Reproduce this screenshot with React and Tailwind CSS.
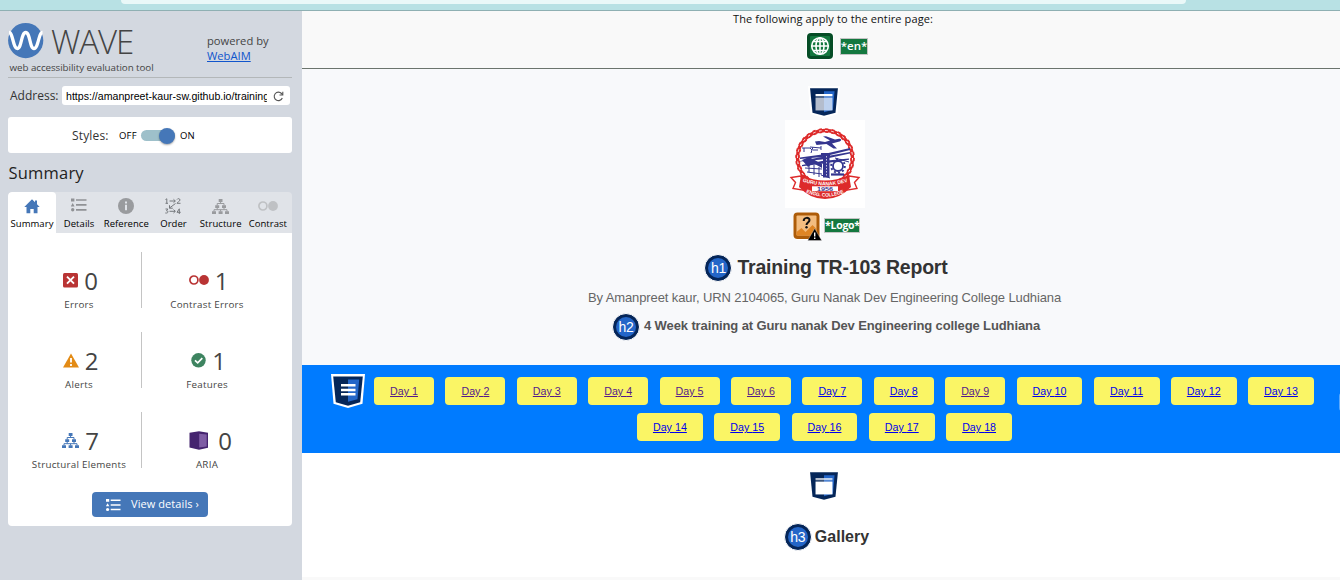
import React from 'react';

const sans = "font-['Open_Sans',sans-serif]";
const arial = "font-['Liberation_Sans',Arial,sans-serif]";

function WaveLogo() {
  return (
    <svg className="block h-[36px] w-[36px] shrink-0" viewBox="0 0 36 36">
      <circle cx="17.7" cy="17.6" r="17.6" fill="#4577b8" />
      <path d="M1 9.500C5 9.500 5 25.500 9.300 25.500C13.800 25.500 13 9.500 17.700 9.500C22.400 9.500 21.500 25.500 26 25.500C30.500 25.500 30.500 9.500 34.500 9.500" fill="none" stroke="#fff" strokeWidth="3.300" />
    </svg>
  );
}

function ListIcon({ className }) {
  return (
    <svg className={className} viewBox="0 0 16 14" fill="currentColor">
      <path d="M0 .5h3.400v3H0zM5 1.200h10.500v1.600H5zM5 6.100h10.500v1.600H5zM5 11.100h10.500v1.600H5zM1.700 5l1.900 3.400H-.2z" />
      <circle cx="1.700" cy="11.800" r="1.700" />
    </svg>
  );
}

function TreeIcon({ className }) {
  return (
    <svg className={className} viewBox="0 0 17 15" fill="currentColor">
      <path d="M6.700 0h3.800v3H6.700zM3.200 6.200h4v2.700h-4zM10 6.200h4v2.700h-4zM0 12.200h4V15H0zM6.600 12.200h4V15h-4zM13 12.200h4V15h-4z" />
      <path d="M8.600 3v1.500M5.200 6.500v-2h6.800v2M5.200 9v1.700M12 9v1.700M2 12.500v-1.800h13v1.800M8.600 12.500v-1.800" fill="none" stroke="currentColor" strokeWidth="1" />
    </svg>
  );
}

function HomeIcon() {
  return (
    <svg className="h-[15px] w-[16px]" viewBox="0 0 16 15" fill="#4577b8">
      <path d="M8 .3L.3 8H2.500V14.300H6.300V10H9.700V14.300H13.500V8H15.700L13 5.300V1.500H11V3.300z" />
    </svg>
  );
}

function InfoIcon() {
  return (
    <svg className="h-[16px] w-[16px]" viewBox="0 0 16 16">
      <circle cx="8" cy="8" r="8" fill="#999b9e" />
      <path d="M7 3.500h2v2H7zM7 6.800h2v5.500H7z" fill="#e0e3e8" />
    </svg>
  );
}

function OrderIcon() {
  return (
    <svg className="h-[16px] w-[16px]" viewBox="0 0 16 16" fill="none" stroke="#75787c" strokeWidth="1">
      <path d="M.5 1.500L1.800.8V5.300M.5 5.300H3M4.500 3H10.200M8.500 1.300l1.800 1.700-1.800 1.700M12 1.500C12.500.3 15 .3 15 2 15 3.300 12 4.300 12 5.300H15.500M10.500 5.500L4.500 10M4.500 7.200V10.200H7.800M.5 11H2.800L1.500 12.800C3.800 12.800 3.500 15.500.3 15M4.500 13.300H10.200M8.500 11.600l1.800 1.700-1.800 1.700M14.300 16V10.800L12 14.300H15.700" />
    </svg>
  );
}

function ContrastIcon({ className }) {
  return (
    <svg className={className} viewBox="0 0 20 10">
      <circle cx="4.900" cy="5" r="4" fill="none" stroke="currentColor" strokeWidth="1.700" />
      <circle cx="15" cy="5" r="4.900" fill="currentColor" />
    </svg>
  );
}

function ErrorIcon() {
  return (
    <svg className="h-[15px] w-[15px]" viewBox="0 0 15 15">
      <rect width="15" height="14.500" rx="1.500" fill="#b93434" />
      <path d="M4 3.700l7 7M11 3.700l-7 7" stroke="#fff" strokeWidth="1.900" />
    </svg>
  );
}

function AlertIcon() {
  return (
    <svg className="h-[15px] w-[16px]" viewBox="0 0 16 15">
      <path d="M8 .5L16 14.500H0z" fill="#e38b16" />
      <path d="M7.100 5h1.800v4.500H7.100zM7.100 11h1.800v1.900H7.100z" fill="#fff" />
    </svg>
  );
}

function FeatureIcon() {
  return (
    <svg className="h-[15px] w-[15px]" viewBox="0 0 15 15">
      <circle cx="7.500" cy="7.300" r="7.200" fill="#3e8460" />
      <path d="M4 7.300l2.700 2.500 4.600-4.600" fill="none" stroke="#fff" strokeWidth="1.700" />
    </svg>
  );
}

function AriaIcon() {
  return (
    <svg className="h-[19px] w-[20px]" viewBox="0 0 20 19">
      <path d="M.5 1.800L10 .3l9 1.500v15L10 18.700.5 16.500z" fill="#45246f" />
      <path d="M10.200 2.700l7.500.8v12l-7.500 1z" fill="#7f5da5" />
    </svg>
  );
}

function ShieldIcon({ kind, className }) {
  return (
    <svg className={className} viewBox="0 0 34 36" preserveAspectRatio="none">
      <path d="M0 0H34L31.500 31.500 17 36 2.500 31.500z" fill="#fff" />
      <path d="M2.200 2.600H31.800L29.200 30 17 33.500 4.800 30z" fill="#052659" />
      <path d="M17 5.800H28.200L26.500 26.700 17 29.500z" fill="#2466c8" />
      {kind === 'nav' && <path d="M10 10.500H24.500V13.200H10zM10 15.500H24.500V18.200H10zM10 20.200H24.500V22.800H10z" fill="#fff" />}
      {kind === 'header' && (
        <>
          <path d="M8 9H26V11.600H8z" fill="#fff" />
          <path d="M8 13H17V27.500H8z" fill="#b4bdcd" />
          <path d="M17 13H26V27.500H17z" fill="#bdd1ee" />
        </>
      )}
      {kind === 'main' && (
        <>
          <path d="M8 9H17V11.600H8z" fill="#b4bdcd" />
          <path d="M17 9H26V11.600H17z" fill="#bdd1ee" />
          <path d="M8 13H26V27.500H8z" fill="#fff" />
        </>
      )}
    </svg>
  );
}

function GlobeIcon() {
  return (
    <svg className="h-[28px] w-[28px] shrink-0" viewBox="0 0 28 28">
      <rect width="28" height="28" rx="5" fill="#fff" />
      <rect x="1" y="1" width="26" height="26" rx="4" fill="#064d26" />
      <rect x="4" y="4" width="20" height="20" rx="1" fill="#14783f" />
      <g fill="none" stroke="#fff" strokeWidth="1.600">
        <circle cx="14" cy="14" r="8.300" />
        <ellipse cx="14" cy="14" rx="4" ry="8.300" />
        <path d="M14 5.500v17M5.700 14h16.600M7.300 9.500h13.400M7.300 18.500h13.400" />
      </g>
    </svg>
  );
}

function HeadingBadge({ label }) {
  return (
    <span className={`${arial} flex h-[28px] w-[28px] shrink-0 items-center justify-center rounded-full border border-white bg-[#052659]`}>
      <span className="flex h-[20px] w-[20px] items-center justify-center rounded-full bg-[#2466c8] text-[14px] leading-none tracking-[-0.3px] text-white">{label}</span>
    </span>
  );
}

function CollegeCrest() {
  return (
    <svg className="block h-[88px] w-[80px]" viewBox="0 0 80 88">
      <rect width="80" height="88" fill="#fff" />
      <circle cx="40" cy="38" r="27.500" fill="none" stroke="#dd2a2a" strokeWidth="3.400" />
      <circle cx="40" cy="38" r="27.500" fill="none" stroke="#dd2a2a" strokeWidth="4.600" strokeDasharray="3 3.170" />
      <circle cx="40" cy="38" r="27.500" fill="none" stroke="#fff" strokeWidth="1" strokeDasharray="2.500 3.670" />
      <g fill="#35368f">
        <path d="M30 21.500l4-.5 6 1 5-1.500-7-4 3-.3 9 3.300 4-.7c3 0 3 2.500-.5 3L47 23.500l5 5h-3.500l-7-4.500-10 1z" />
        <path d="M38 35h6.500v22.500H38zM36 33h9v3h-9zM17 40l7-3 13 7v4l-9-5-5 4z" />
        <path d="M15 37.500l22-3 28-6.500v2l-28 7-22 2zM15 41l22-4 28-5v1.500l-28 6-22 2zM17 45l20-4 27-2.500v1.300l-27 4-20 2.500z" />
      </g>
      <g fill="none" stroke="#35368f" strokeWidth="1">
        <path d="M17 28h8l2 2M19 28v4M25 27l11 1M28 27l-2 6M33 30h-5M36 26v4M24 44v8M29 45v10M34 47v10M20 48l17 1M22 52l15 2M36 55l9 3M50 38l14 4" />
        <circle cx="53" cy="46" r="5" strokeWidth="1.800" />
        <circle cx="53" cy="46" r="6.800" strokeWidth="2" strokeDasharray="2 2.270" />
        <path d="M46 54.500h13" strokeWidth="2.200" />
      </g>
      <path d="M41.500 36v21" stroke="#fff" strokeWidth=".7" strokeDasharray="1.500 1.500" />
      <path d="M16 56L6 57.500l4.500 5L8 68.500l12 2zM64 56L74 57.500l-4.500 5 2.500 6-12 2z" fill="#fff" stroke="#dd2a2a" strokeWidth="1.400" />
      <path d="M16 55Q40 66 64 55L66 67Q55 79 40 79Q25 79 14 67z" fill="#dd2a2a" />
      <path d="M27 66.300H53V71.200H27z" fill="#fff" />
      <defs>
        <path id="crest-top" d="M17.500 61.500Q40 69.300 63 61.500" />
        <path id="crest-bottom" d="M21 72.500Q40 80.800 59.500 72.500" />
      </defs>
      <g fontFamily="Liberation Sans" fontWeight="bold">
        <text fontSize="5" fill="#fff"><textPath href="#crest-top" textLength="46" lengthAdjust="spacingAndGlyphs">GURU NANAK DEV</textPath></text>
        <text x="32" y="70.800" fontSize="5.500" fill="#35368f" textLength="16" lengthAdjust="spacingAndGlyphs">1956</text>
        <text fontSize="5" fill="#fff"><textPath href="#crest-bottom" textLength="39" lengthAdjust="spacingAndGlyphs">ENGG. COLLEGE</textPath></text>
      </g>
    </svg>
  );
}

function AltIcon() {
  return (
    <svg className="h-[30px] w-[30px] shrink-0" viewBox="0 0 30 30">
      <rect width="28" height="28" rx="5" fill="#fff" />
      <rect x=".500" y=".500" width="26" height="26.500" rx="4" fill="#ad5c09" />
      <rect x="3.500" y="3.500" width="20" height="20" rx="1" fill="#f3bd80" />
      <path d="M3.500 20l5-4 4 4 7-7 4 4v6.500h-20z" fill="#df8524" />
      <path d="M10.700 9C10.700 5 16.500 5 16.500 8C16.500 10.500 13.500 10.500 13.500 13" fill="none" stroke="#111" strokeWidth="2" />
      <circle cx="13.500" cy="15.300" r="1.200" fill="#111" />
      <path d="M21.700 16.500l7 12h-14z" fill="#000" stroke="#fff" strokeWidth=".3" />
      <path d="M21 20.500h1.400v4h-1.400zM21 25.500h1.400v1.500h-1.400z" fill="#fff" />
    </svg>
  );
}

const tabs = [
  { label: 'Summary', icon: <HomeIcon /> },
  { label: 'Details', icon: <ListIcon className="mb-[2px] h-[14px] w-[16px] text-[#909295]" /> },
  { label: 'Reference', icon: <InfoIcon /> },
  { label: 'Order', icon: <OrderIcon /> },
  { label: 'Structure', icon: <TreeIcon className="h-[15px] w-[17px] text-[#999b9e]" /> },
  { label: 'Contrast', icon: <ContrastIcon className="h-[10px] w-[20px] text-[#bfc1c4]" /> },
];

const stats = [
  { label: 'Errors', value: 0, icon: <ErrorIcon /> },
  { label: 'Contrast Errors', value: 1, icon: <ContrastIcon className="h-[10px] w-[20px] text-[#b93434]" /> },
  { label: 'Alerts', value: 2, icon: <AlertIcon /> },
  { label: 'Features', value: 1, icon: <FeatureIcon /> },
  { label: 'Structural Elements', value: 7, icon: <TreeIcon className="h-[15px] w-[17px] text-[#4577b8]" /> },
  { label: 'ARIA', value: 0, icon: <AriaIcon />, wide: true },
];

function Stat({ label, value, icon, wide, divider }) {
  return (
    <div className={`h-[56px] ${divider ? 'w-[134px] border-r border-[#c4c4c4]' : 'w-[130px]'}`}>
      <div className={`flex flex-col items-center pt-[12px] ${divider ? 'pl-[9px]' : ''}`}>
        <div className={`flex h-[33px] items-center ${wide ? 'gap-[9px] pl-[7px]' : 'gap-[6px] pl-[3px]'}`}>
          <span className={wide ? 'flex' : 'flex pb-[1px]'}>{icon}</span>
          <span className="text-[24px] leading-[33px] text-[#444]">{value}</span>
        </div>
        <div className="mt-[1px] text-[9.800px] leading-[14px] tracking-[0.25px] whitespace-nowrap text-[#444]">{label}</div>
      </div>
    </div>
  );
}

function Sidebar() {
  return (
    <aside className={`${sans} w-[302px] shrink-0 bg-[#d3d8e0] px-[8px] text-black`}>
      <div className="flex h-[67px] w-[284px] border-b border-[#b3b7b9] pt-[12px]">
        <div className="w-[199px] shrink-0">
          <div className="flex h-[36px] gap-[7px]">
            <WaveLogo />
            <span className="pt-[1px] text-[33px] leading-[35px] font-light tracking-[-1.100px] text-[#444]">WAVE</span>
          </div>
          <div className="mt-[2px] pl-[1.500px] text-[9.800px] leading-[13px] tracking-[-0.060px] whitespace-nowrap text-[#444]">web accessibility evaluation tool</div>
        </div>
        <div className="pt-[10px] text-[11.200px] leading-[15px] whitespace-nowrap text-[#444]">
          powered by<br />
          <a className="text-[#1155cc] underline">WebAIM</a>
        </div>
      </div>
      <div className="mt-[8px] flex h-[19px] items-center">
        <span className="w-[54px] pl-[2px] text-[12px] leading-[19px] whitespace-nowrap text-[#333]">Address:</span>
        <div className="flex h-[19px] w-[228px] items-center rounded-[3px] bg-white pt-[1px] pl-[4px]">
          <span className={`${arial} w-[201px] overflow-hidden text-[10.600px] leading-[18px] whitespace-nowrap`}>https://amanpreet-kaur-sw.github.io/training</span>
          <svg className="ml-[6px] h-[11px] w-[11px] shrink-0" viewBox="0 0 11 11" fill="none" stroke="#555" strokeWidth="1.100">
            <path d="M9.300 7A4.200 4.200 0 1 1 8.500 2.500L9.800 4M9.800.7V4H6.500" />
          </svg>
        </div>
      </div>
      <div className="mt-[12px] flex h-[36px] w-[284px] items-center rounded-[3px] bg-white pt-[1px] pl-[64px]">
        <span className="w-[47px] text-[12px] tracking-[0.150px] whitespace-nowrap text-[#333]">Styles:</span>
        <span className="w-[22px] pt-[1px] text-[9.500px] tracking-[0.200px]">OFF</span>
        <span className="flex h-[11px] w-[34px] items-center justify-end rounded-full bg-[#9ec0ca]">
          <span className="h-[16px] w-[16px] shrink-0 rounded-full bg-[#4577b8] shadow-[0_1px_2px_rgba(0,0,0,0.35)]" />
        </span>
        <span className="ml-[5px] pt-[1px] text-[9.500px]">ON</span>
      </div>
      <h2 className="mt-[7px] h-[32px] pl-[0.500px] text-[16.500px] leading-[26px] tracking-[0.200px] text-[#222]">Summary</h2>
      <div className="flex h-[41px] w-[284px] overflow-hidden rounded-t-[4px] bg-[#e0e3e8]">
        {tabs.map((t, i) => (
          <div key={t.label} className={`flex shrink-0 flex-col items-center ${i === 0 ? 'w-[48px] rounded-t-[4px] bg-white' : 'w-[47.200px] pr-[1px]'}`}>
            <span className="flex h-[25px] items-center justify-center pt-[3px]">{t.icon}</span>
            <span className="text-[9.500px] leading-[13px] tracking-[0.050px] whitespace-nowrap">{t.label}</span>
          </div>
        ))}
      </div>
      <div className="flex h-[293px] w-[284px] flex-col items-center rounded-b-[4px] bg-white pt-[19px]">
        <div className="grid w-full grid-cols-[134px_130px] gap-y-[24px]">
          {stats.map((s, i) => (
            <Stat key={s.label} {...s} divider={i % 2 === 0} />
          ))}
        </div>
        <button className="mt-[24px] flex h-[25px] w-[116px] items-center rounded-[4px] bg-[#4577b8] pl-[14px] text-[11px] tracking-[0.080px] whitespace-nowrap text-white">
          <ListIcon className="mr-[10px] h-[14px] w-[15px] shrink-0" />
          View details ›
        </button>
      </div>
    </aside>
  );
}

const visited = [1, 2, 3, 4, 5, 6, 9];

function DayLink({ n }) {
  return (
    <a className={`${arial} flex h-[28px] shrink-0 items-center justify-center rounded-[4px] bg-[#faf565] pt-[1px] text-[10.700px] leading-[27px] whitespace-nowrap underline ${n > 9 ? 'w-[65.800px]' : 'w-[60px]'} ${visited.includes(n) ? 'text-[#551a8b]' : 'text-[#0000ee]'}`}>
      Day {n}
    </a>
  );
}

export default function App() {
  return (
    <div className="flex h-[580px] w-[1340px] flex-col overflow-hidden bg-white">
      <div className="h-[11px] border-b border-[#8fb0b3] bg-[#b8e1e4] pr-[154px] pl-[121px]">
        <div className="h-[4px] rounded-b-[14px] bg-[#eaf8f8]" />
      </div>
      <div className="flex h-[569px]">
        <Sidebar />
        <main className={`${arial} flex w-[1038px] flex-col`}>
          <section className={`${sans} flex h-[58px] flex-col items-center border-b border-[#6b746d] bg-[#f9f9f9] pl-[24px]`}>
            <div className="text-[11px] leading-[16px] tracking-[0.100px] whitespace-nowrap text-[#111]">The following apply to the entire page:</div>
            <div className="mt-[5px] flex items-center gap-[6px] pl-[8px]">
              <GlobeIcon />
              <span className="flex h-[17px] items-center border border-[#c4c4c4] bg-[#14783f] text-[11.500px] leading-none font-semibold text-white">*en*</span>
            </div>
          </section>
          <header className="flex h-[296px] flex-col items-center bg-[#f8f9fb] pl-[6px]">
            <ShieldIcon kind="header" className="mt-[17px] h-[32px] w-[32px]" />
            <div className="mt-[2px] pl-[2px]"><CollegeCrest /></div>
            <div className="mt-[4px] flex h-[30px] w-full items-start pl-[485px]">
              <AltIcon />
              <span className={`${sans} mt-[6px] ml-[1px] flex h-[15px] w-[36px] items-center border border-[#c4c4c4] bg-[#14783f] text-[10.500px] leading-none font-bold tracking-[-0.250px] whitespace-nowrap text-white`}>*Logo*</span>
            </div>
            <div className="mt-[12px] flex h-[28px] items-center gap-[5px] pl-[4px]">
              <HeadingBadge label="h1" />
              <h1 className="pb-[2px] text-[19.500px] leading-[24px] font-bold tracking-[-0.200px] whitespace-nowrap text-[#333]">Training TR-103 Report</h1>
            </div>
            <p className="mt-[6px] pl-[1px] text-[13px] leading-[20px] tracking-[-0.110px] whitespace-nowrap text-[#666]">By Amanpreet kaur, URN 2104065, Guru Nanak Dev Engineering College Ludhiana</p>
            <div className="mt-[5px] flex h-[28px] items-center gap-[4px] pl-[4px]">
              <HeadingBadge label="h2" />
              <h2 className="pb-[2px] text-[13px] leading-[20px] font-bold tracking-[-0.110px] whitespace-nowrap text-[#555]">4 Week training at Guru nanak Dev Engineering college Ludhiana</h2>
            </div>
          </header>
          <nav className="flex h-[88px] overflow-hidden bg-[#007bff] pl-[29px]">
            <ShieldIcon kind="nav" className="mt-[9px] h-[34px] w-[34px] shrink-0" />
            <div className="ml-[9px] flex w-[940px] shrink-0 flex-col gap-[8px] pt-[12px]">
              <div className="flex gap-[11.400px]">
                {[1, 2, 3, 4, 5, 6, 7, 8, 9, 10, 11, 12, 13].map((n) => <DayLink key={n} n={n} />)}
              </div>
              <div className="flex gap-[11.500px] pl-[263px]">
                {[14, 15, 16, 17, 18].map((n) => <DayLink key={n} n={n} />)}
              </div>
            </div>
            <div className="mt-[28px] ml-[25px] h-[18px] w-[4px] shrink-0 rounded-l-[3px] bg-[#5aa9ff]" />
          </nav>
          <section className="flex h-[124px] flex-col items-center bg-white pl-[6px]">
            <ShieldIcon kind="main" className="mt-[17px] h-[32px] w-[32px]" />
            <div className="mt-[21px] flex h-[28px] items-center gap-[3px] pl-[5px]">
              <HeadingBadge label="h3" />
              <h3 className="pb-[1px] text-[16px] leading-[21px] font-bold whitespace-nowrap text-[#333]">Gallery</h3>
            </div>
          </section>
          <div className="h-[3px] bg-[#f9f9f9]" />
        </main>
      </div>
    </div>
  );
}
